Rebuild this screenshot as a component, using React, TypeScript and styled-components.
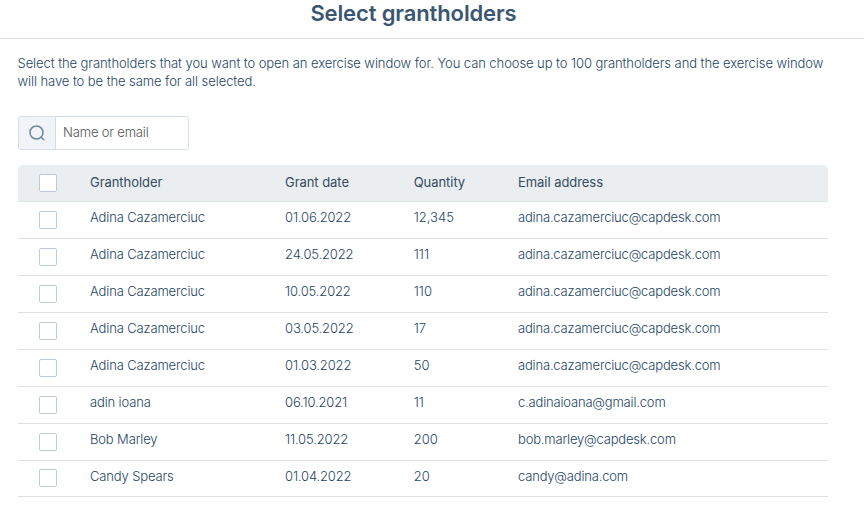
import React from "react";
import styled, { createGlobalStyle } from "styled-components";

const GlobalStyle = createGlobalStyle`
  *, *::before, *::after { box-sizing: border-box; }
  body { margin: 0; background: #fff; font-family: Inter, sans-serif; overflow: hidden; }
`;

const Page = styled.main`
  width: 864px;
  height: 506px;
  background: #fff;
  color: #254565;
  font-size: 13px;
  font-weight: 300;
`;

const Header = styled.header`
  height: 39px;
  padding-right: 37px;
  border-bottom: 1px solid #d9dfe5;
  text-align: center;
`;

const Title = styled.h1`
  margin: 0;
  font-size: 22px;
  line-height: 27px;
  font-weight: 600;
  letter-spacing: -0.13px;
  color: #3b5670;
`;

const Content = styled.section`
  padding: 15px 36px 0 18px;
`;

const Description = styled.p`
  margin: 0 0 0 -0.5px;
  line-height: 18px;
  white-space: nowrap;
  letter-spacing: -0.07px;
`;

const SearchBox = styled.label`
  display: flex;
  width: 171px;
  height: 34px;
  margin-top: 26px;
  border: 1px solid #d5dee6;
  border-radius: 3px;
  overflow: hidden;
`;

const SearchIcon = styled.span`
  display: flex;
  align-items: center;
  justify-content: center;
  width: 37px;
  background: #f0f4f8;
  border-right: 1px solid #d5dee6;
`;

const SearchInput = styled.input`
  flex: 1;
  min-width: 0;
  padding: 0 7px 2px;
  border: 0;
  outline: 0;
  font: 300 13px Inter, sans-serif;
  letter-spacing: -0.16px;
  &::placeholder { color: #555; opacity: 1; }
`;

const Table = styled.div`
  width: 810px;
  margin-top: 15px;
`;

const Row = styled.div<{ $head?: boolean }>`
  display: grid;
  grid-template-columns: 72px 195px 128.7px 104.3px 1fr;
  height: 37px;
  border-bottom: 1px solid ${(p) => (p.$head ? "#dce2e7" : "#dddfe1")};
  line-height: ${(p) => (p.$head ? "34px" : "30px")};
  font-weight: ${(p) => (p.$head ? 400 : 300)};
  color: ${(p) => (p.$head ? "#344b60" : "#254565")};
  background: ${(p) => (p.$head ? "#eaeef1" : "#fff")};
  border-radius: ${(p) => (p.$head ? "5px 5px 0 0" : "0")};
  &:last-child { height: 36px; }
  &:last-child input { margin-top: 8px; }
`;

const Cell = styled.span<{ $tracking: number }>`
  white-space: nowrap;
  letter-spacing: ${(p) => p.$tracking}px;
`;

const Checkbox = styled.input`
  appearance: none;
  width: 18px;
  height: 18px;
  margin: 9px 0 0 21px;
  border: 1px solid #bccbd9;
  border-radius: 2px;
  background: #fff;
`;

const columnTracking = [-0.14, -0.15, 0, -0.18];

const holders = [
  ["Adina Cazamerciuc", "01.06.2022", "12,345", "adina.cazamerciuc@capdesk.com"],
  ["Adina Cazamerciuc", "24.05.2022", "111", "adina.cazamerciuc@capdesk.com"],
  ["Adina Cazamerciuc", "10.05.2022", "110", "adina.cazamerciuc@capdesk.com"],
  ["Adina Cazamerciuc", "03.05.2022", "17", "adina.cazamerciuc@capdesk.com"],
  ["Adina Cazamerciuc", "01.03.2022", "50", "adina.cazamerciuc@capdesk.com"],
  ["adin ioana", "06.10.2021", "11", "c.adinaioana@gmail.com"],
  ["Bob Marley", "11.05.2022", "200", "bob.marley@capdesk.com"],
  ["Candy Spears", "01.04.2022", "20", "candy@adina.com"],
];

export default function App() {
  return (
    <Page>
      <GlobalStyle />
      <Header><Title>Select grantholders</Title></Header>
      <Content>
        <Description>
          Select the grantholders that you want to open an exercise window for. You can choose up to 100 grantholders and the exercise window
          <br />
          will have to be the same for all selected.
        </Description>
        <SearchBox>
          <SearchIcon>
            <svg width="18" height="18" viewBox="0 0 18 18" fill="none" stroke="#6f869b" strokeWidth="1.5" strokeLinecap="round">
              <circle cx="8.5" cy="8.5" r="6.5" />
              <path d="M13.2 13.2 15.8 15.8" />
            </svg>
          </SearchIcon>
          <SearchInput placeholder="Name or email" />
        </SearchBox>
        <Table>
          <Row $head>
            <Checkbox type="checkbox" />
            {["Grantholder", "Grant date", "Quantity", "Email address"].map((t) => (
              <Cell key={t} $tracking={-0.05}>{t}</Cell>
            ))}
          </Row>
          {holders.map((h, i) => (
            <Row key={i}>
              <Checkbox type="checkbox" />
              {h.map((t, j) => <Cell key={j} $tracking={columnTracking[j]}>{t}</Cell>)}
            </Row>
          ))}
        </Table>
      </Content>
    </Page>
  );
}
